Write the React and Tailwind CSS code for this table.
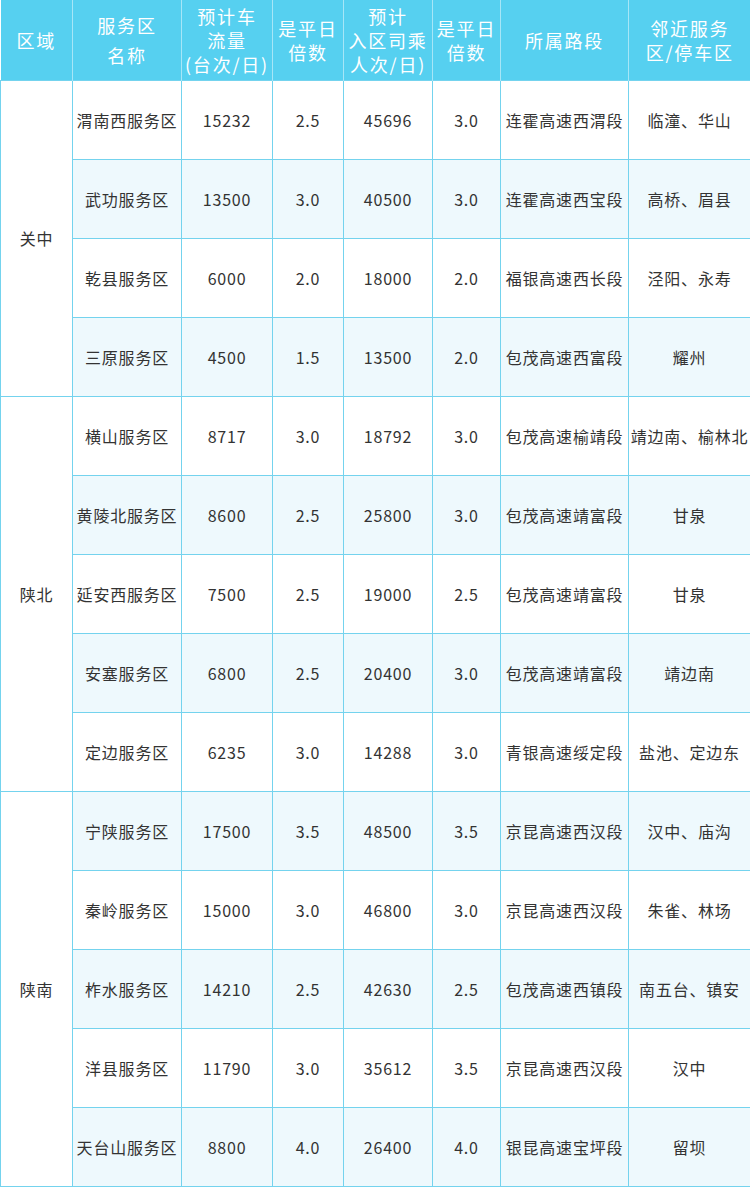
import React from "react";

const groups = [
  {
    region: "关中",
    rows: [
      ["渭南西服务区", "15232", "2.5", "45696", "3.0", "连霍高速西渭段", "临潼、华山"],
      ["武功服务区", "13500", "3.0", "40500", "3.0", "连霍高速西宝段", "高桥、眉县"],
      ["乾县服务区", "6000", "2.0", "18000", "2.0", "福银高速西长段", "泾阳、永寿"],
      ["三原服务区", "4500", "1.5", "13500", "2.0", "包茂高速西富段", "耀州"],
    ],
  },
  {
    region: "陕北",
    rows: [
      ["横山服务区", "8717", "3.0", "18792", "3.0", "包茂高速榆靖段", "靖边南、榆林北"],
      ["黄陵北服务区", "8600", "2.5", "25800", "3.0", "包茂高速靖富段", "甘泉"],
      ["延安西服务区", "7500", "2.5", "19000", "2.5", "包茂高速靖富段", "甘泉"],
      ["安塞服务区", "6800", "2.5", "20400", "3.0", "包茂高速靖富段", "靖边南"],
      ["定边服务区", "6235", "3.0", "14288", "3.0", "青银高速绥定段", "盐池、定边东"],
    ],
  },
  {
    region: "陕南",
    rows: [
      ["宁陕服务区", "17500", "3.5", "48500", "3.5", "京昆高速西汉段", "汉中、庙沟"],
      ["秦岭服务区", "15000", "3.0", "46800", "3.0", "京昆高速西汉段", "朱雀、林场"],
      ["柞水服务区", "14210", "2.5", "42630", "2.5", "包茂高速西镇段", "南五台、镇安"],
      ["洋县服务区", "11790", "3.0", "35612", "3.5", "京昆高速西汉段", "汉中"],
      ["天台山服务区", "8800", "4.0", "26400", "4.0", "银昆高速宝坪段", "留坝"],
    ],
  },
];

const headers = [
  ["区域"],
  ["服务区", "名称"],
  ["预计车", "流量", "(台次/日)"],
  ["是平日", "倍数"],
  ["预计", "入区司乘", "人次/日)"],
  ["是平日", "倍数"],
  ["所属路段"],
  ["邻近服务", "区/停车区"],
];

const widths = ["w-[72px]", "w-[109px]", "w-[91px]", "w-[71px]", "w-[89px]", "w-[68px]", "w-[128px]", "w-[122px]"];

export default function App() {
  let index = 0;
  return (
    <div
      className="w-[750px] bg-white"
      style={{ fontFamily: '"Noto Sans CJK SC", "Noto Sans", sans-serif' }}
    >
      <table className="w-[750px] table-fixed border-collapse">
        <colgroup>
          {widths.map((w, i) => (
            <col key={i} className={w} />
          ))}
        </colgroup>
        <thead>
          <tr className="h-[80px] bg-[#56d0f0]">
            {headers.map((lines, i) => (
              <th
                key={i}
                className={`border-x border-[#a6e6f7] p-0 text-center align-middle text-[18px] font-normal tracking-[0.1em] text-white first:border-l-0 last:border-r-0 ${
                  i === 1 ? "leading-[30px]" : "leading-[24px]"
                }`}
              >
                {lines.map((l, j) => (
                  <div key={j} className="whitespace-nowrap">
                    {l}
                  </div>
                ))}
              </th>
            ))}
          </tr>
        </thead>
        <tbody>
          {groups.map((g) =>
            g.rows.map((row, ri) => {
              index += 1;
              const shaded = index % 2 === 0;
              return (
                <tr key={row[0]} className={`h-[79px] ${shaded ? "bg-[#eef9fd]" : "bg-white"}`}>
                  {ri === 0 && (
                    <td
                      rowSpan={g.rows.length}
                      className="border border-[#74d3ee] bg-white p-0 text-center text-[16px] tracking-[0.05em] text-[#333]"
                    >
                      {g.region}
                    </td>
                  )}
                  {row.map((cell, ci) => (
                    <td
                      key={ci}
                      className="whitespace-nowrap border border-[#74d3ee] p-0 text-center text-[16px] tracking-[0.05em] text-[#333]"
                    >
                      {cell}
                    </td>
                  ))}
                </tr>
              );
            })
          )}
        </tbody>
      </table>
    </div>
  );
}
